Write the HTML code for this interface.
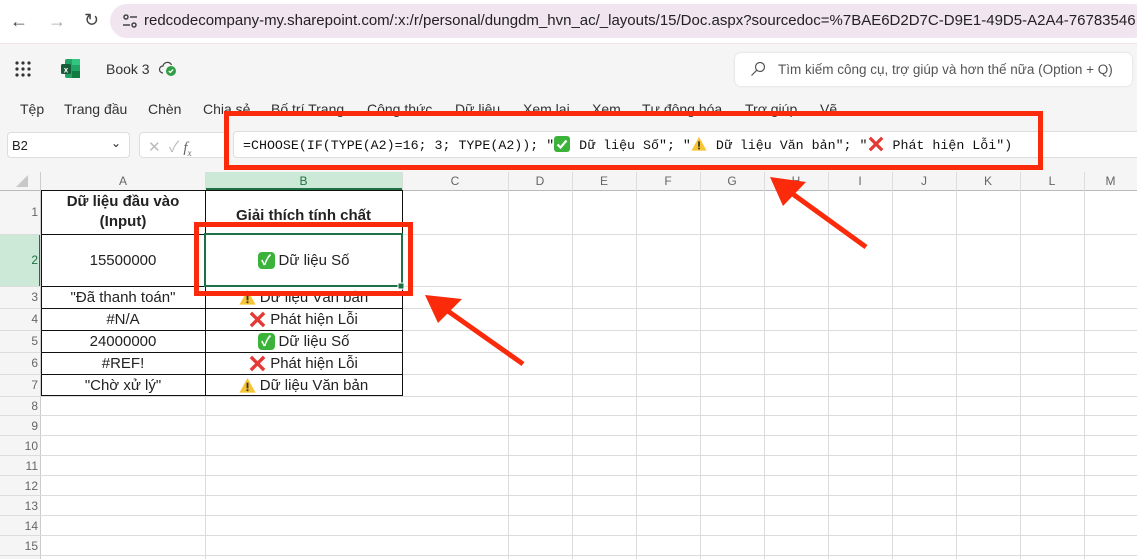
<!DOCTYPE html>
<html><head><meta charset="utf-8"><style>
*{margin:0;padding:0;box-sizing:border-box}
body{width:1137px;height:559px;overflow:hidden;background:#f5f5f5;font-family:"Liberation Sans","Noto Sans CJK JP",sans-serif;position:relative;color:#242424}
.a{position:absolute}
.tab{position:absolute;top:101px;font-size:14px;color:#333}
.cell{position:absolute;font-size:15px;color:#222;text-align:center;display:flex;align-items:center;justify-content:center}
.ch{position:absolute;top:172px;height:18px;font-size:12px;color:#666;text-align:center;line-height:18px}
.rh{position:absolute;left:0;width:38px;text-align:right;font-size:12px;color:#666}
.ok{display:inline-block;width:17px;height:17px;border-radius:4px;background:#3bb33a;color:#fff;font-size:14px;line-height:17px;text-align:center;font-weight:bold;margin-right:4px}
.ic{display:inline-block;width:17px;height:17px;margin-right:4px}
.fi{display:inline-block;width:16px;height:16px;vertical-align:-3px;margin-right:1px}
</style></head><body>
<!-- browser bar -->
<div class="a" style="left:0;top:0;width:1137px;height:44px;background:#fff;border-bottom:1px solid #f0e4ee"></div>
<div class="a" style="left:10px;top:11px;font-size:18px;color:#444">←</div>
<div class="a" style="left:48px;top:11px;font-size:18px;color:#aaa">→</div>
<div class="a" style="left:84px;top:10px;font-size:18px;color:#444">↻</div>
<div class="a" style="left:110px;top:4px;width:1040px;height:34px;border-radius:17px;background:#f1e5f0"></div>
<svg class="a" style="left:122px;top:13px" width="16" height="16" viewBox="0 0 16 16" fill="none" stroke="#444" stroke-width="1.5"><circle cx="4" cy="4" r="2"/><line x1="8" y1="4" x2="15" y2="4"/><circle cx="12" cy="12" r="2"/><line x1="1" y1="12" x2="8" y2="12"/></svg>
<div class="a" style="left:144px;top:12px;font-size:15px;color:#222;white-space:nowrap">redcodecompany-my.sharepoint.com/:x:/r/personal/dungdm_hvn_ac/_layouts/15/Doc.aspx?sourcedoc=%7BAE6D2D7C-D9E1-49D5-A2A4-76783546</div>
<!-- app header -->
<svg class="a" style="left:14px;top:60px" width="18" height="18" viewBox="0 0 18 18" fill="#333"><circle cx="3" cy="3" r="1.6"/><circle cx="9" cy="3" r="1.6"/><circle cx="15" cy="3" r="1.6"/><circle cx="3" cy="9" r="1.6"/><circle cx="9" cy="9" r="1.6"/><circle cx="15" cy="9" r="1.6"/><circle cx="3" cy="15" r="1.6"/><circle cx="9" cy="15" r="1.6"/><circle cx="15" cy="15" r="1.6"/></svg>
<svg class="a" style="left:61px;top:59px" width="19" height="19" viewBox="0 0 19 19"><rect x="4" y="0" width="15" height="19" rx="2" fill="#21a366"/><rect x="11" y="0" width="8" height="6" fill="#33c481"/><rect x="11" y="12" width="8" height="7" fill="#107c41"/><rect x="0" y="5" width="10" height="10" rx="1.5" fill="#185c37"/><text x="5" y="13.5" font-size="8" fill="#fff" text-anchor="middle" font-family="Liberation Sans" font-weight="bold">x</text></svg>
<div class="a" style="left:106px;top:61px;font-size:14px;color:#333">Book 3</div>
<svg class="a" style="left:159px;top:61px" width="18" height="16" viewBox="0 0 18 16"><path d="M4 12a3.5 3.5 0 0 1 0-7 4.5 4.5 0 0 1 8.5-1" fill="none" stroke="#444" stroke-width="1.2"/><circle cx="12" cy="10" r="5" fill="#2f9e44"/><path d="M9.8 10l1.5 1.5 2.8-3" stroke="#fff" stroke-width="1.3" fill="none"/></svg>
<div class="a" style="left:735px;top:53px;width:397px;height:33px;background:#fff;border-radius:6px;box-shadow:0 0 2px rgba(0,0,0,.15)"></div>
<svg class="a" style="left:750px;top:61px" width="16" height="16" viewBox="0 0 16 16" fill="none" stroke="#555" stroke-width="1.2"><circle cx="10" cy="6" r="4.5"/><line x1="6.8" y1="9.2" x2="1.5" y2="14.5"/></svg>
<div class="a" style="left:778px;top:62px;font-size:13.5px;color:#555;white-space:nowrap">Tìm kiếm công cụ, trợ giúp và hơn thế nữa (Option + Q)</div>
<!-- tabs -->
<div class="tab" style="left:20px">Tệp</div><div class="tab" style="left:64px">Trang đầu</div><div class="tab" style="left:148px">Chèn</div><div class="tab" style="left:203px">Chia sẻ</div><div class="tab" style="left:271px">Bố trí Trang</div><div class="tab" style="left:367px">Công thức</div><div class="tab" style="left:455px">Dữ liệu</div><div class="tab" style="left:523px">Xem lại</div><div class="tab" style="left:592px">Xem</div><div class="tab" style="left:642px">Tự động hóa</div><div class="tab" style="left:745px">Trợ giúp</div><div class="tab" style="left:820px">Vẽ</div>
<!-- formula bar -->
<div class="a" style="left:7px;top:132px;width:123px;height:26px;background:#fff;border:1px solid #ddd;border-radius:4px;font-size:13px;padding:5px 4px;color:#222">B2<span style="position:absolute;right:8px;top:3px;font-size:12px">⌄</span></div>
<div class="a" style="left:139px;top:132px;width:88px;height:26px;background:#fff;border:1px solid #ddd;border-radius:4px;font-size:15px;color:#bbb;padding:3px 8px">✕ &nbsp;✓ <i style="font-family:'Liberation Serif';color:#666">f<sub style="font-size:9px">x</sub></i></div>
<div class="a" style="left:233px;top:131px;width:910px;height:27px;background:#fff;border:1px solid #ddd;border-radius:4px"></div>
<div class="a" style="left:243px;top:136px;font-family:'Liberation Mono',monospace;font-size:13.3px;color:#111;white-space:nowrap">=CHOOSE(IF(TYPE(A2)=16; 3; TYPE(A2)); "<svg class="fi" viewBox="0 0 16 16"><rect x="0" y="0" width="16" height="16" rx="3" fill="#3bb33a"/><path d="M3.5 8.5l3 3 6-7" stroke="#fff" stroke-width="2.2" fill="none"/></svg> Dữ liệu Số"; "<svg class="fi" viewBox="0 0 18 18"><path d="M9 1L17.5 16.5H.5z" fill="#f7c531"/><rect x="8" y="6" width="2" height="6" fill="#333"/><rect x="8" y="13" width="2" height="2" fill="#333"/></svg> Dữ liệu Văn bản"; "<svg class="fi" viewBox="0 0 18 18"><path d="M2 2L16 16M16 2L2 16" stroke="#e53935" stroke-width="3.6"/></svg> Phát hiện Lỗi")</div>
<!-- grid -->
<div class="a" style="left:0;top:172px;width:1137px;height:387px;background:#fff"></div>
<div class="a" style="left:0;top:172px;width:1137px;height:18px;background:#f5f5f5"></div>
<div class="a" style="left:0;top:172px;width:41px;height:387px;background:#f5f5f5"></div>
<div class="a" style="left:205px;top:172px;width:197px;height:18px;background:#cbe9d6;border-bottom:2px solid #1e7145"></div>
<div class="a" style="left:0;top:234px;width:41px;height:52px;background:#cbe9d6;border-right:2px solid #1e7145"></div>
<svg class="a" style="left:0;top:172px" width="1137" height="387">
<g stroke="#dcdcdc" stroke-width="1">
<line x1="0" y1="18.5" x2="1137" y2="18.5" stroke="#bbb"/>
<line x1="40.5" y1="0" x2="40.5" y2="387" stroke="#ccc"/>
<line x1="508.5" y1="0" x2="508.5" y2="387"/><line x1="572.5" y1="0" x2="572.5" y2="387"/><line x1="636.5" y1="0" x2="636.5" y2="387"/><line x1="700.5" y1="0" x2="700.5" y2="387"/><line x1="764.5" y1="0" x2="764.5" y2="387"/><line x1="828.5" y1="0" x2="828.5" y2="387"/><line x1="892.5" y1="0" x2="892.5" y2="387"/><line x1="956.5" y1="0" x2="956.5" y2="387"/><line x1="1020.5" y1="0" x2="1020.5" y2="387"/><line x1="1084.5" y1="0" x2="1084.5" y2="387"/>
<line x1="205.5" y1="0" x2="205.5" y2="18"/><line x1="402.5" y1="0" x2="402.5" y2="18"/>
<line x1="0" y1="62.5" x2="1137" y2="62.5"/><line x1="0" y1="114.5" x2="1137" y2="114.5"/><line x1="0" y1="136.5" x2="1137" y2="136.5"/><line x1="0" y1="158.5" x2="1137" y2="158.5"/><line x1="0" y1="180.5" x2="1137" y2="180.5"/><line x1="0" y1="202.5" x2="1137" y2="202.5"/>
<line x1="0" y1="243.5" x2="1137" y2="243.5"/><line x1="0" y1="263.5" x2="1137" y2="263.5"/><line x1="0" y1="283.5" x2="1137" y2="283.5"/><line x1="0" y1="303.5" x2="1137" y2="303.5"/><line x1="0" y1="323.5" x2="1137" y2="323.5"/><line x1="0" y1="343.5" x2="1137" y2="343.5"/><line x1="0" y1="363.5" x2="1137" y2="363.5"/><line x1="0" y1="383.5" x2="1137" y2="383.5"/>
<line x1="205.5" y1="224" x2="205.5" y2="387"/><line x1="0" y1="224.5" x2="1137" y2="224.5"/>
</g>
<g stroke="#111" stroke-width="1">
<line x1="41" y1="18.5" x2="402" y2="18.5"/><line x1="41" y1="114.5" x2="402" y2="114.5"/><line x1="41" y1="136.5" x2="402" y2="136.5"/><line x1="41" y1="158.5" x2="402" y2="158.5"/><line x1="41" y1="180.5" x2="402" y2="180.5"/><line x1="41" y1="202.5" x2="402" y2="202.5"/><line x1="41" y1="223.5" x2="402" y2="223.5"/><line x1="41" y1="62.5" x2="205" y2="62.5"/>
<line x1="41.5" y1="18" x2="41.5" y2="224"/><line x1="205.5" y1="18" x2="205.5" y2="224"/><line x1="402.5" y1="18" x2="402.5" y2="224"/>
</g>
<rect x="205" y="62" width="197" height="52" fill="none" stroke="#1e7145" stroke-width="2"/>
<rect x="398" y="111" width="6" height="6" fill="#1e7145" stroke="#fff" stroke-width="1"/>
<path d="M28 3L28 15L16 15z" fill="#c8c8c8"/>
</svg>
<div class="ch" style="left:41px;width:164px">A</div><div class="ch" style="left:205px;width:197px;color:#1e7145">B</div><div class="ch" style="left:402px;width:106px">C</div><div class="ch" style="left:508px;width:64px">D</div><div class="ch" style="left:572px;width:64px">E</div><div class="ch" style="left:636px;width:64px">F</div><div class="ch" style="left:700px;width:64px">G</div><div class="ch" style="left:764px;width:64px">H</div><div class="ch" style="left:828px;width:64px">I</div><div class="ch" style="left:892px;width:64px">J</div><div class="ch" style="left:956px;width:64px">K</div><div class="ch" style="left:1020px;width:64px">L</div><div class="ch" style="left:1084px;width:53px">M</div>
<div class="rh" style="top:205px">1</div><div class="rh" style="top:253px;color:#1e7145">2</div><div class="rh" style="top:290px">3</div><div class="rh" style="top:312px">4</div><div class="rh" style="top:334px">5</div><div class="rh" style="top:356px">6</div><div class="rh" style="top:378px">7</div><div class="rh" style="top:399px">8</div><div class="rh" style="top:419px">9</div><div class="rh" style="top:439px">10</div><div class="rh" style="top:459px">11</div><div class="rh" style="top:479px">12</div><div class="rh" style="top:499px">13</div><div class="rh" style="top:519px">14</div><div class="rh" style="top:539px">15</div>
<div class="cell" style="left:41px;top:190px;width:164px;height:44px;font-weight:bold;line-height:20px">Dữ liệu đầu vào<br>(Input)</div>
<div class="cell" style="left:205px;top:200px;width:197px;height:30px;font-weight:bold">Giải thích tính chất</div>
<div class="cell" style="left:41px;top:234px;width:164px;height:52px">15500000</div>
<div class="cell" style="left:205px;top:234px;width:197px;height:52px"><span class="ok">✓</span>Dữ liệu Số</div>
<div class="cell" style="left:41px;top:286px;width:164px;height:22px">"Đã thanh toán"</div>
<div class="cell" style="left:205px;top:286px;width:197px;height:22px"><svg class="ic" viewBox="0 0 18 18"><path d="M9 1L17.5 16.5H.5z" fill="#f7c531"/><rect x="8" y="6" width="2" height="6" fill="#333"/><rect x="8" y="13" width="2" height="2" fill="#333"/></svg>Dữ liệu Văn bản</div>
<div class="cell" style="left:41px;top:308px;width:164px;height:22px">#N/A</div>
<div class="cell" style="left:205px;top:308px;width:197px;height:22px"><svg class="ic" viewBox="0 0 18 18"><path d="M2 2L16 16M16 2L2 16" stroke="#e53935" stroke-width="3.6"/></svg>Phát hiện Lỗi</div>
<div class="cell" style="left:41px;top:330px;width:164px;height:22px">24000000</div>
<div class="cell" style="left:205px;top:330px;width:197px;height:22px"><span class="ok">✓</span>Dữ liệu Số</div>
<div class="cell" style="left:41px;top:352px;width:164px;height:22px">#REF!</div>
<div class="cell" style="left:205px;top:352px;width:197px;height:22px"><svg class="ic" viewBox="0 0 18 18"><path d="M2 2L16 16M16 2L2 16" stroke="#e53935" stroke-width="3.6"/></svg>Phát hiện Lỗi</div>
<div class="cell" style="left:41px;top:374px;width:164px;height:22px">"Chờ xử lý"</div>
<div class="cell" style="left:205px;top:374px;width:197px;height:22px"><svg class="ic" viewBox="0 0 18 18"><path d="M9 1L17.5 16.5H.5z" fill="#f7c531"/><rect x="8" y="6" width="2" height="6" fill="#333"/><rect x="8" y="13" width="2" height="2" fill="#333"/></svg>Dữ liệu Văn bản</div>
<!-- annotations -->
<div class="a" style="left:224px;top:111px;width:819px;height:59px;border:5px solid #fa2a0a"></div>
<div class="a" style="left:194px;top:222px;width:219px;height:74px;border:5px solid #fa2a0a"></div>
<svg class="a" style="left:0;top:0" width="1137" height="559">
<line x1="866" y1="247" x2="790" y2="192" stroke="#fa2a0a" stroke-width="5"/>
<polygon points="770,177 806,182 783,206" fill="#fa2a0a"/>
<line x1="523" y1="364" x2="445" y2="309" stroke="#fa2a0a" stroke-width="5"/>
<polygon points="425,295 462,299 438,323" fill="#fa2a0a"/>
</svg>
</body></html>
